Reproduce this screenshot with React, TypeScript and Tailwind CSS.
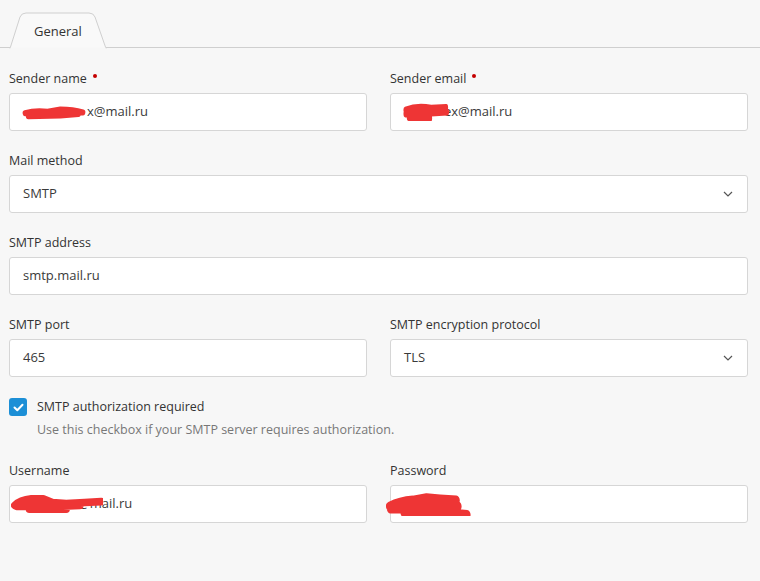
import React from 'react';

const font = { fontFamily: '"Open Sans", "Noto Sans", Arial, sans-serif' };

function Label({ text, required }: { text: string; required?: boolean }) {
  return (
    <div className="h-[18px] mb-[5px] flex items-center text-[12.5px] leading-[18px] text-[#333]">
      {text}
      {required && <span className="ml-[6px] mb-[7px] w-[4px] h-[4px] rounded-full bg-[#c40000]" />}
    </div>
  );
}

function Scribble({ d, className }: { d: string; className: string }) {
  return (
    <svg className={`absolute pointer-events-none ${className}`} viewBox="0 0 100 20" preserveAspectRatio="none">
      <path d={d} stroke="#ee3535" strokeWidth="8" strokeLinecap="round" strokeLinejoin="round" fill="none" />
    </svg>
  );
}

function Input({ value, children }: { value: string; children?: React.ReactNode }) {
  return (
    <div className="relative h-[38px] bg-white border border-[#d6d6d6] rounded-[3px] flex items-center pl-[13px] text-[13px] text-[#3a3a3a]">
      {value}
      {children}
    </div>
  );
}

function Select({ value }: { value: string }) {
  return (
    <div className="h-[38px] bg-white border border-[#d6d6d6] rounded-[3px] flex items-center justify-between pl-[13px] pr-[14px] text-[13px] text-[#3a3a3a]">
      {value}
      <svg width="10" height="6" viewBox="0 0 10 6">
        <path d="M1 1l4 4 4-4" stroke="#555" strokeWidth="1.2" fill="none" />
      </svg>
    </div>
  );
}

export default function App() {
  return (
    <div className="w-[760px] h-[581px] bg-[#f7f7f7] overflow-hidden" style={font}>
      {/* Tabs */}
      <div className="relative h-[48px] border-b border-[#cfcfcf]">
        <svg className="absolute left-[9px] top-[12px]" width="98" height="37" viewBox="0 0 98 37">
          <path d="M1 36.5 L11 5 Q12.5 1 17 1 L80 1 Q84.5 1 86 5 L97 36.5" fill="#f9f9f9" stroke="#cfcfcf" strokeWidth="1" />
          <rect x="1.6" y="35.5" width="95" height="2" fill="#f7f7f7" />
        </svg>
        <span className="absolute left-[34px] top-[22px] text-[13px] leading-[18px] text-[#333]">General</span>
      </div>

      <div className="pl-[9px] pr-[12px] pt-[22px] flex flex-col gap-[21px]">
        <div className="grid grid-cols-2 gap-x-[23px]">
          <div>
            <Label text="Sender name" required />
            <Input value="">
              <span className="ml-[64px]">x@mail.ru</span>
              <Scribble className="left-[12px] top-[11px] w-[64px] h-[15px]" d="M5 11 Q20 7 40 9 L60 6 Q80 6 95 10 M10 15 L60 14 L88 12" />
            </Input>
          </div>
          <div>
            <Label text="Sender email" required />
            <Input value="">
              <span className="ml-[40px]">ex@mail.ru</span>
              <Scribble className="left-[12px] top-[9px] w-[47px] h-[18px]" d="M5 8 Q30 3 60 6 L92 5 M5 12 L60 11 L94 10 M12 16 L58 17" />
            </Input>
          </div>
        </div>

        <div>
          <Label text="Mail method" />
          <Select value="SMTP" />
        </div>

        <div>
          <Label text="SMTP address" />
          <Input value="smtp.mail.ru" />
        </div>

        <div className="grid grid-cols-2 gap-x-[23px]">
          <div>
            <Label text="SMTP port" />
            <Input value="465" />
          </div>
          <div>
            <Label text="SMTP encryption protocol" />
            <Select value="TLS" />
          </div>
        </div>

        <div className="flex flex-col">
          <div className="flex items-center gap-[10px]">
            <div className="w-[18px] h-[18px] rounded-[3px] bg-[#1c8fd6] flex items-center justify-center">
              <svg width="11" height="9" viewBox="0 0 11 9">
                <path d="M1.5 4.5l2.8 2.8L9.5 1.8" stroke="white" strokeWidth="2" fill="none" strokeLinecap="round" strokeLinejoin="round" />
              </svg>
            </div>
            <span className="text-[12.5px] leading-[18px] text-[#333]">SMTP authorization required</span>
          </div>
          <div className="ml-[28px] mt-[5px] text-[12.5px] leading-[18px] text-[#777]">
            Use this checkbox if your SMTP server requires authorization.
          </div>
        </div>

        <div className="grid grid-cols-2 gap-x-[23px] mt-[2px]">
          <div>
            <Label text="Username" />
            <Input value="">
              <span className="ml-[55px]">@mail.ru</span>
              <Scribble className="left-[1px] top-[8px] w-[92px] h-[19px]" d="M4 12 Q10 6 22 5 L35 5 L45 9 L60 10 L80 9 L98 8 M6 13 L50 13 L75 12 M20 16 L60 16" />
            </Input>
          </div>
          <div>
            <Label text="Password" />
            <Input value="">
              <Scribble className="left-[-5px] top-[6px] w-[90px] h-[24px]" d="M4 12 Q15 8 30 7 L45 5 L60 6 L78 7 M5 14 L50 13 L70 11 L80 12 M20 17 L75 18 L90 19 M30 20 L80 21" />
            </Input>
          </div>
        </div>
      </div>
    </div>
  );
}
